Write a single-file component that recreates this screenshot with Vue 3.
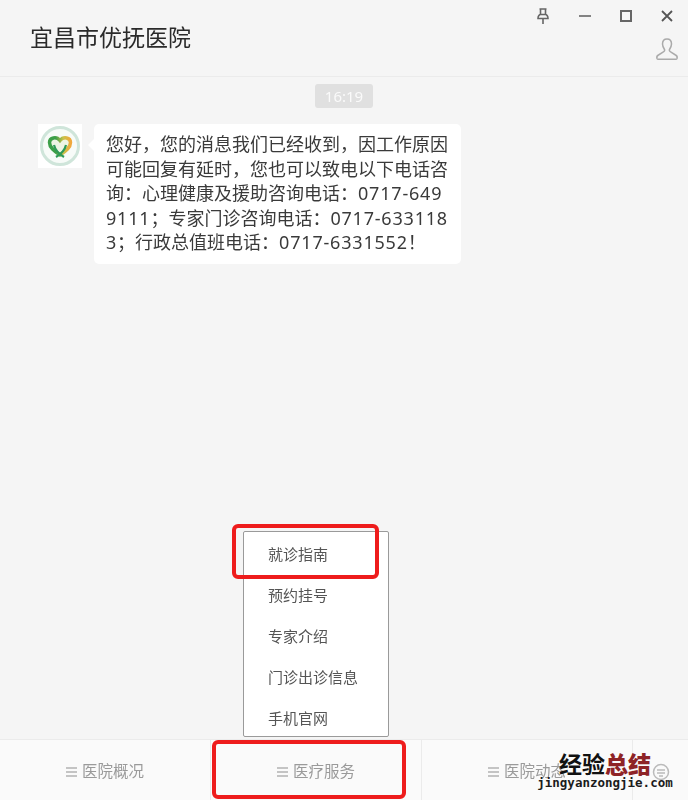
<script setup>
// fullwidth punctuation as escapes: comma, colon, semicolon, exclamation
const messageLines = [
  '您好\uFF0C您的消息我们已经收到\uFF0C因工作原因',
  '可能回复有延时\uFF0C您也可以致电以下电话咨',
  '询\uFF1A心理健康及援助咨询电话\uFF1A0717-649',
  '9111\uFF1B专家门诊咨询电话\uFF1A0717-633118',
  '3\uFF1B行政总值班电话\uFF1A0717-6331552\uFF01'
]
const menuItems = ['就诊指南', '预约挂号', '专家介绍', '门诊出诊信息', '手机官网']
const tabs = ['医院概况', '医疗服务', '医院动态']

// digits sit a little wider in the reference than in the CJK text around them
const segments = (line) => line.split(/([0-9-]+)/).filter(Boolean)
const isNumber = (part) => /^[0-9-]+$/.test(part)
</script>

<template>
  <div class="page">
    <div class="window">
      <header class="header">
        <h1 class="title">宜昌市优抚医院</h1>
        <div class="header-right">
          <div class="controls">
            <svg width="16" height="18" viewBox="0 0 16 18" fill="none" stroke="#666" stroke-width="1.6">
              <path d="M4.500 2h7M5.500 2v5.500M10.500 2v5.500M3 11.500c0-2.500 1.500-4 2.500-4h5c1 0 2.500 1.500 2.500 4zM8 11.500V17" />
            </svg>
            <svg width="14" height="14" viewBox="0 0 14 14" fill="none" stroke="#777" stroke-width="1.8">
              <path d="M1 7h12" />
            </svg>
            <svg width="14" height="14" viewBox="0 0 14 14" fill="none" stroke="#666" stroke-width="2">
              <rect x="2" y="2" width="10" height="10" />
            </svg>
            <svg width="14" height="14" viewBox="0 0 14 14" fill="none" stroke="#555" stroke-width="1.8">
              <path d="M2 2l10 10M12 2L2 12" />
            </svg>
          </div>
          <svg class="profile" width="24" height="24" viewBox="0 0 24 24" fill="none" stroke="#aaa" stroke-width="1.500">
            <path d="M12 2c-3 0-4.500 2.300-4.500 5 0 2.500 1 4 2 5.500.6 1-.2 2-1.500 2.700L3.500 18c-1.500.8-2 2-1.500 3.500.2.500.7.700 1.200.7h17.600c.5 0 1-.2 1.200-.7.500-1.500 0-2.700-1.500-3.500L16 15.200c-1.300-.7-2.100-1.700-1.500-2.700 1-1.500 2-3 2-5.500 0-2.700-1.500-5-4.500-5z" />
          </svg>
        </div>
      </header>

      <main class="chat">
        <div class="time-row"><span class="time">16:19</span></div>
        <div class="message">
          <div class="avatar">
            <svg width="42" height="42" viewBox="0 0 42 42">
              <defs>
                <linearGradient id="heart" x1="0" y1="0" x2="1" y2="0">
                  <stop offset="0.3" stop-color="#3c9f48" />
                  <stop offset="0.65" stop-color="#c9c24a" />
                  <stop offset="1" stop-color="#f0a83c" />
                </linearGradient>
              </defs>
              <circle cx="21" cy="21" r="18.500" fill="#f7fbf8" stroke="#cfe5da" stroke-width="3" />
              <path d="M21 30c-6-4-10.500-7.500-10.500-12.500 0-5 7-6.500 10.500-2 3.500-4.500 10.500-3 10.500 2 0 5-4.500 8.500-10.500 12.500z" fill="#eef4e4" stroke="url(#heart)" stroke-width="3.500" />
              <path d="M15 20c1 4.500 5 9 10 12M27 20c-1 4.500-5 9-10 12" fill="none" stroke="#2f9a58" stroke-width="2.200" />
            </svg>
          </div>
          <div class="bubble">
            <div v-for="line in messageLines" :key="line" class="line">
              <span
                v-for="(part, i) in segments(line)"
                :key="i"
                :class="{ num: isNumber(part) }"
              >{{ part }}</span>
            </div>
          </div>
        </div>

        <ul class="menu">
          <li v-for="item in menuItems" :key="item" class="menu-item">{{ item }}</li>
        </ul>
        <div class="mark mark-menu"></div>
      </main>

      <footer class="tabs">
        <div v-for="tab in tabs" :key="tab" class="tab">
          <span class="burger"><i></i><i></i><i></i></span>
          <span>{{ tab }}</span>
        </div>
        <div class="keyboard">
          <svg width="18" height="22" viewBox="0 0 18 22" fill="none" stroke="#bbb" stroke-width="1.500">
            <circle cx="9" cy="12" r="7.500" />
            <path d="M5 10h8M5 13h8M7 16h4" />
          </svg>
        </div>
        <div class="mark mark-tab"></div>
      </footer>
    </div>

    <div class="watermark">
      <div class="wm-cn">经验<b>总结</b></div>
      <div class="wm-en">jingyanzongjie.com</div>
    </div>
  </div>
</template>

<style scoped>
.page {
  position: relative;
  width: 688px;
  height: 800px;
  overflow: hidden;
  font-family: "Noto Sans", "Noto Sans CJK SC", sans-serif;
}

/* the reference is a soft, upscaled capture */
.window {
  height: 100%;
  display: flex;
  flex-direction: column;
  background: #f5f5f5;
  filter: blur(0.45px);
}

.header {
  height: 77px;
  flex: none;
  box-sizing: border-box;
  display: flex;
  justify-content: space-between;
  border-bottom: 1px solid #ebebeb;
  padding-left: 30px;
}

.title {
  margin: 21px 0 0;
  font-size: 23px;
  line-height: 32px;
  font-weight: 400;
  color: #2a2a2a;
}

.header-right {
  display: flex;
  flex-direction: column;
  align-items: flex-end;
  padding: 7px 14px 0 0;
}

.controls {
  display: flex;
  align-items: center;
  gap: 27px;
}

.profile {
  margin: 12px -5px 0 0;
}

.chat {
  flex: 1;
  position: relative;
  padding-top: 7px;
}

.time-row {
  display: flex;
  justify-content: center;
}

.time {
  width: 58px;
  height: 24px;
  background: #e0e0e0;
  border-radius: 3px;
  color: #fafafa;
  font-size: 15px;
  line-height: 24px;
  text-align: center;
}

.message {
  display: flex;
  margin: 16px 0 0 38px;
}

.avatar {
  width: 44px;
  height: 44px;
  background: #fff;
  display: flex;
  align-items: center;
  justify-content: center;
  flex: none;
}

.bubble {
  position: relative;
  margin-left: 12px;
  width: 367px;
  height: 140px;
  box-sizing: border-box;
  padding: 8px 0 0 12px;
  background: #fff;
  border-radius: 5px;
  color: #3a3a3a;
  font-size: 18px;
  line-height: 24.500px;
}

.bubble::before {
  content: "";
  position: absolute;
  left: -6px;
  top: 15px;
  border-style: solid;
  border-width: 6px 6px 6px 0;
  border-color: transparent #fff transparent transparent;
}

.line {
  white-space: nowrap;
}

.num {
  letter-spacing: 0.8px;
}

.menu {
  position: absolute;
  left: 243px;
  top: 454px;
  width: 146px;
  height: 206px;
  box-sizing: border-box;
  margin: 0;
  padding: 2px 0 0;
  list-style: none;
  background: #fff;
  border: 1px solid #9a9a9a;
  border-radius: 2px;
}

.menu-item {
  height: 41px;
  padding-left: 24px;
  font-size: 15px;
  line-height: 41px;
  color: #555;
}

.mark {
  position: absolute;
  box-sizing: border-box;
  border: 4px solid #ee1c1c;
  border-radius: 6px;
  pointer-events: none;
}

.mark-menu {
  left: 232px;
  top: 447px;
  width: 147px;
  height: 55px;
}

.tabs {
  position: relative;
  height: 61px;
  flex: none;
  box-sizing: border-box;
  display: flex;
  background: #fafafa;
  border-top: 1px solid #ebebeb;
}

.tab {
  width: 210px;
  display: flex;
  align-items: center;
  justify-content: center;
  gap: 5px;
  border-right: 1px solid #ebebeb;
  font-size: 15.500px;
  color: #9a9a9a;
}

.burger {
  display: flex;
  flex-direction: column;
  gap: 2.500px;
  width: 11px;
  margin-top: 4px;
}

.burger i {
  height: 1.500px;
  background: #c4c4c4;
}

.keyboard {
  flex: 1;
  display: flex;
  align-items: center;
  justify-content: center;
  padding-top: 2px;
}

.mark-tab {
  left: 212px;
  top: 0;
  width: 194px;
  height: 59px;
}

.watermark {
  position: absolute;
  right: 15px;
  top: 751px;
  width: 136px;
  text-align: center;
}

.wm-cn {
  font-family: "Noto Sans CJK SC", sans-serif;
  font-size: 23px;
  line-height: 24px;
  font-weight: 700;
  color: #111;
}

.wm-cn b {
  color: #8e2326;
}

.wm-en {
  font-family: "DejaVu Sans Mono", monospace;
  font-size: 12.500px;
  line-height: 16px;
  font-weight: 700;
  color: #1c1c1c;
  white-space: nowrap;
}
</style>
